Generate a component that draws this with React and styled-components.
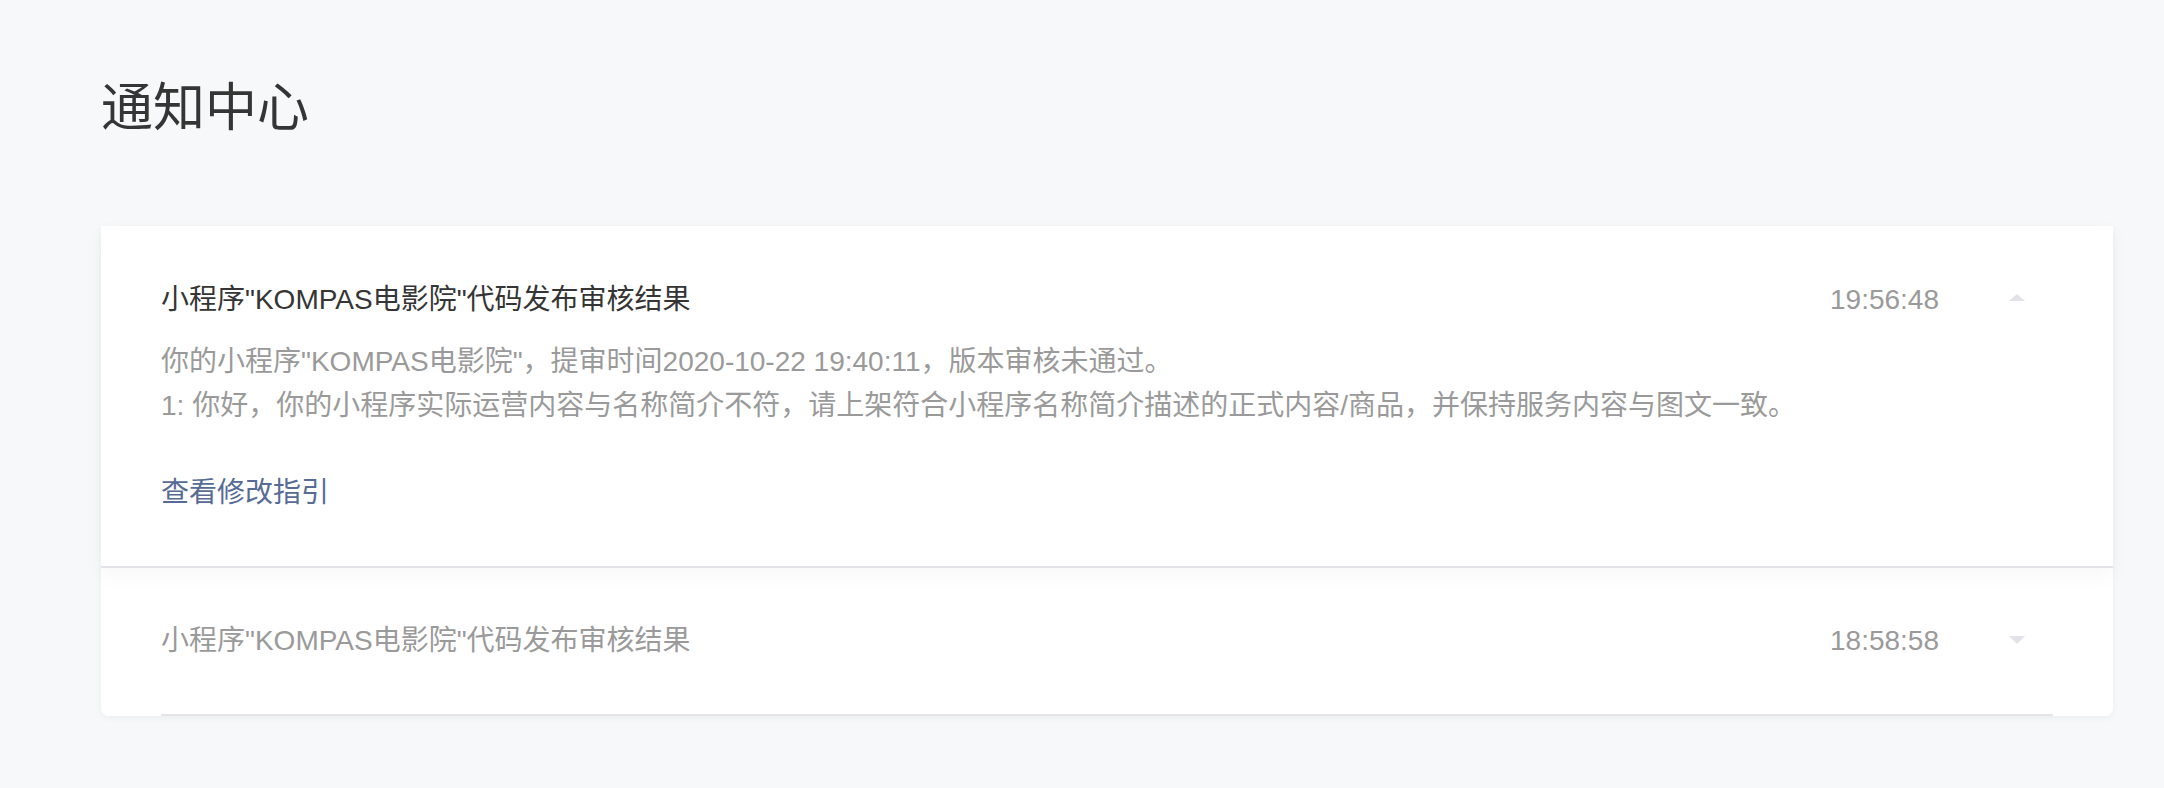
import styled, { createGlobalStyle } from "styled-components";

const GlobalStyle = createGlobalStyle`
  body {
    margin: 0;
    background: #f7f8fa;
    font-family: "Liberation Sans", "Noto Sans CJK SC", sans-serif;
  }
`;

const notices = [
  {
    id: 1,
    title: '小程序"KOMPAS电影院"代码发布审核结果',
    time: "19:56:48",
    expanded: true,
    lines: [
      '你的小程序"KOMPAS电影院"，提审时间2020-10-22 19:40:11，版本审核未通过。',
      "1: 你好，你的小程序实际运营内容与名称简介不符，请上架符合小程序名称简介描述的正式内容/商品，并保持服务内容与图文一致。",
    ],
    link: "查看修改指引",
  },
  {
    id: 2,
    title: '小程序"KOMPAS电影院"代码发布审核结果',
    time: "18:58:58",
    expanded: false,
  },
];

const App = () => {
  return (
    <>
      <GlobalStyle />
      <Page>
        <Heading>通知中心</Heading>
        <Card>
          {notices.map((n) => (
            <Item key={n.id} $expanded={n.expanded}>
              <Inner $expanded={n.expanded}>
                <Header>
                  <Title $expanded={n.expanded}>{n.title}</Title>
                  <Time>{n.time}</Time>
                  <Toggle>
                    <Caret $up={n.expanded} />
                  </Toggle>
                </Header>
                {n.expanded && (
                  <>
                    <Body>
                      {n.lines.map((l) => (
                        <p key={l}>{l}</p>
                      ))}
                    </Body>
                    <Link href="#">{n.link}</Link>
                  </>
                )}
              </Inner>
            </Item>
          ))}
        </Card>
      </Page>
    </>
  );
};

export default App;

const Page = styled.div`
  padding: 72px 51px 72px 101px;
`;

const Heading = styled.h1`
  margin: 0;
  font-size: 52px;
  line-height: 72px;
  font-weight: 400;
  color: #353535;
`;

const Card = styled.section`
  margin-top: 82px;
  background: #fff;
  border-radius: 0 0 8px 8px;
  box-shadow: 0 2px 6px rgba(0, 0, 0, 0.05);
`;

const Item = styled.div`
  position: relative;
  padding: 0 60px;
  background: #fff;
  ${(p) =>
    p.$expanded &&
    `
    z-index: 1;
    border-bottom: 2px solid #e4e4e8;
    box-shadow: 0 8px 22px rgba(0, 0, 0, 0.035);
  `}
  &:last-child {
    border-radius: 0 0 8px 8px;
  }
`;

const Inner = styled.div`
  padding: ${(p) => (p.$expanded ? "54px 0 53px" : "53px 0 53px")};
  border-bottom: ${(p) => (p.$expanded ? "none" : "2px solid #e4e4e8")};
`;

const Header = styled.div`
  display: flex;
  align-items: center;
  height: 40px;
`;

const Title = styled.div`
  flex: 1;
  font-size: 28px;
  line-height: 40px;
  color: ${(p) => (p.$expanded ? "#353535" : "#9a9a9a")};
`;

const Time = styled.div`
  font-size: 28px;
  line-height: 40px;
  color: #9a9a9a;
  margin-right: 42px;
`;

const Toggle = styled.div`
  width: 72px;
  display: flex;
  justify-content: center;
  align-items: center;
`;

const Caret = styled.span`
  width: 0;
  height: 0;
  border-left: 8px solid transparent;
  border-right: 8px solid transparent;
  ${(p) =>
    p.$up
      ? "border-bottom: 7px solid #e2e2e8; margin-top: -6px;"
      : "border-top: 8px solid #e2e2e8; margin-top: -2px;"}
`;

const Body = styled.div`
  margin-top: 20px;
  font-size: 28px;
  line-height: 44px;
  color: #9a9a9a;

  p {
    margin: 0;
  }
`;

const Link = styled.a`
  display: block;
  margin-top: 45px;
  font-size: 28px;
  line-height: 40px;
  color: #576b95;
  text-decoration: none;
`;
